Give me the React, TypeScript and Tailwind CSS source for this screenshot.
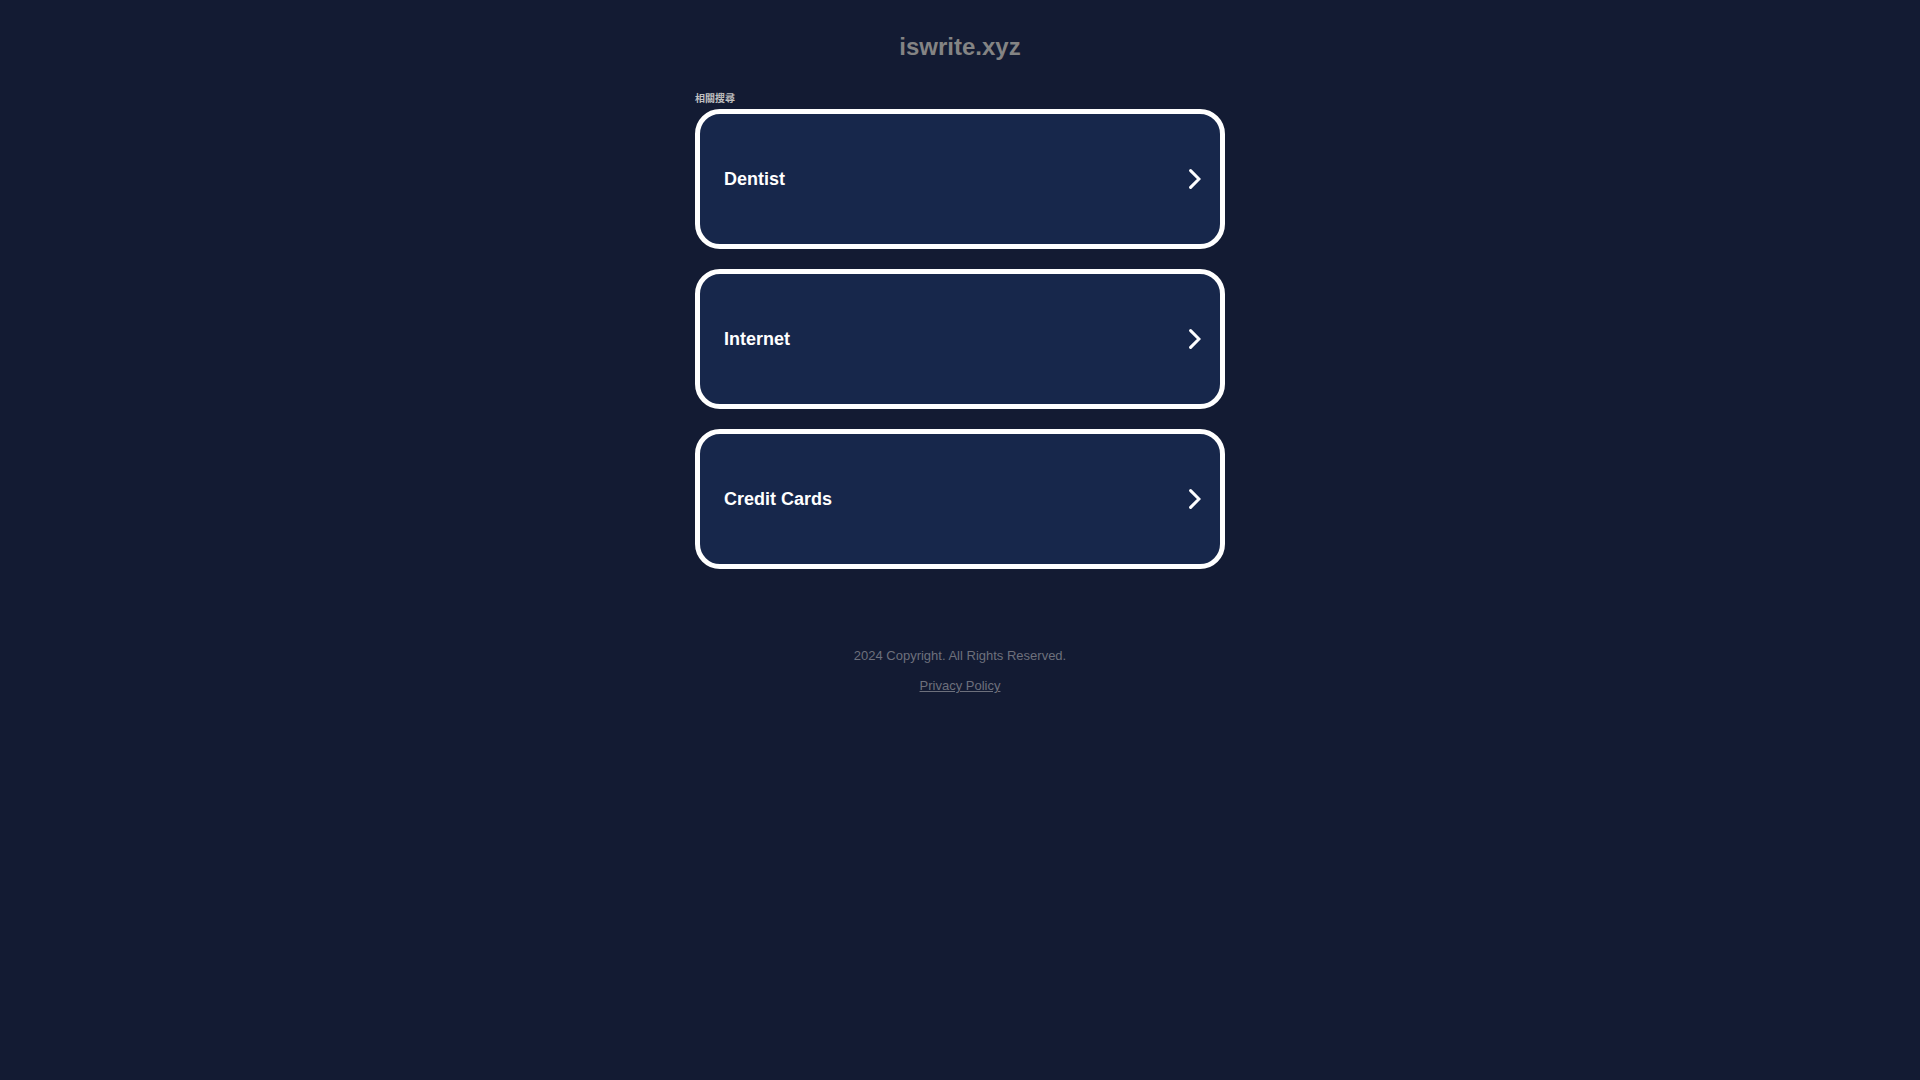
const terms = ["Dentist", "Internet", "Credit Cards"];

function Chevron() {
  return (
    <svg width="12" height="20" viewBox="0 0 12 20" fill="none" aria-hidden="true">
      <path d="M1.6 1.6 L10 10 L1.6 18.4" stroke="#fff" strokeWidth="3" strokeLinecap="round" />
    </svg>
  );
}

export default function App() {
  return (
    <div className="flex min-h-screen flex-col items-center bg-[#131b33] font-['Liberation_Sans',Arial,sans-serif]">
      <h1 className="pt-[33px] text-2xl leading-7 font-bold text-[#848484]">iswrite.xyz</h1>
      <main className="mt-8 w-full max-w-[530px]">
        <h2 className="mb-1 font-['Liberation_Sans','Noto_Sans_CJK_TC',sans-serif] text-[10px] leading-3 font-bold text-[#c0c0c0]" lang="zh-TW">
          相關搜尋
        </h2>
        <ul className="flex flex-col gap-5">
          {terms.map((term) => (
            <li key={term}>
              <a
                href="#"
                className="flex h-[140px] items-center justify-between rounded-[25px] border-[5px] border-white bg-[#17274b] pr-[19px] pl-6 text-lg font-bold text-white"
              >
                {term}
                <Chevron />
              </a>
            </li>
          ))}
        </ul>
      </main>
      <footer className="mt-[78px] flex flex-col items-center gap-3 text-[13px] leading-[18px] text-[#6d707c]">
        <p>2024 Copyright. All Rights Reserved.</p>
        <a href="#" className="underline">Privacy Policy</a>
      </footer>
    </div>
  );
}
